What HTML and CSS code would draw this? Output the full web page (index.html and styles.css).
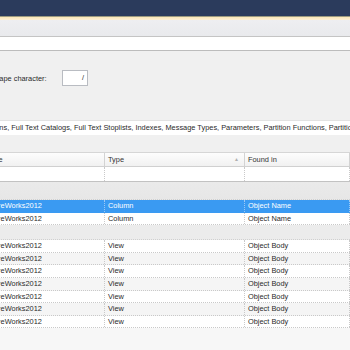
FILE: index.html
```html
<!DOCTYPE html>
<html lang="en">
<head>
    <meta charset="UTF-8">
    <title>SQL Search</title>
    <link rel="stylesheet" href="styles.css">
</head>
<body>

    <div class="app">
        <div class="titlebar"></div>
        <div class="accent"></div>
        <div class="toolbar"></div>
        <div class="searchbar"></div>

        <div class="options">
            <div class="escape-row">
                <span class="label">Escape character:</span>
                <span class="input">/</span>
            </div>
            <div class="types">Columns, Full Text Catalogs, Full Text Stoplists, Indexes, Message Types, Parameters, Partition Functions, Partition Schemes</div>
        </div>

        <div class="grid">
            <div class="grid-header">
                <div class="cell">Database</div>
                <div class="cell sorted">Type <span class="sort">&#9650;</span></div>
                <div class="cell">Found in</div>
            </div>
            <div class="row filter">
                <div class="cell"></div>
                <div class="cell"></div>
                <div class="cell"></div>
            </div>
            <div class="group first"></div>
            <div class="row selected">
                <div class="cell">AdventureWorks2012</div>
                <div class="cell">Column</div>
                <div class="cell">Object Name</div>
            </div>
            <div class="row">
                <div class="cell">AdventureWorks2012</div>
                <div class="cell">Column</div>
                <div class="cell">Object Name</div>
            </div>
            <div class="group"></div>
            <div class="row">
                <div class="cell">AdventureWorks2012</div>
                <div class="cell">View</div>
                <div class="cell">Object Body</div>
            </div>
            <div class="row alt">
                <div class="cell">AdventureWorks2012</div>
                <div class="cell">View</div>
                <div class="cell">Object Body</div>
            </div>
            <div class="row">
                <div class="cell">AdventureWorks2012</div>
                <div class="cell">View</div>
                <div class="cell">Object Body</div>
            </div>
            <div class="row alt">
                <div class="cell">AdventureWorks2012</div>
                <div class="cell">View</div>
                <div class="cell">Object Body</div>
            </div>
            <div class="row">
                <div class="cell">AdventureWorks2012</div>
                <div class="cell">View</div>
                <div class="cell">Object Body</div>
            </div>
            <div class="row alt">
                <div class="cell">AdventureWorks2012</div>
                <div class="cell">View</div>
                <div class="cell">Object Body</div>
            </div>
            <div class="row">
                <div class="cell">AdventureWorks2012</div>
                <div class="cell">View</div>
                <div class="cell">Object Body</div>
            </div>
        </div>
    </div>

</body>
</html>
```

FILE: styles.css
```css
body {
    margin: 0;
    font-family: 'Liberation Sans', Arial, sans-serif;
    font-size: 7.4px;
    color: #2a2a2a;
    background: #f4f4f4;
    overflow: hidden;
}

.app {
    width: 350px;
    height: 350px;
    overflow: hidden;
    background: #f4f4f4;
}

.titlebar {
    height: 16px;
    background: #2b3b5c;
}

.accent {
    height: 4px;
    border-top: 1px solid #9c9a80;
    box-sizing: border-box;
    background: linear-gradient(#fbe6b6, #fdf1d8);
}

.toolbar {
    height: 16px;
    background: linear-gradient(#eeeef1, #e9eaed);
    border-bottom: 1px solid #c4c4c4;
}

.searchbar {
    height: 13px;
    background: #fff;
    border-bottom: 1px solid #bcbcbc;
}

.options {
    height: 101px;
    background: #f0f0f0;
    display: flex;
    flex-direction: column;
}

.escape-row {
    display: flex;
    align-items: center;
    margin-left: -13px;
    margin-top: 19px;
}

.label {
    width: 75px;
}

.input {
    width: 26px;
    height: 16px;
    box-sizing: border-box;
    border: 1px solid #b9bcc2;
    background: #fff;
    text-align: right;
    padding-right: 3px;
    line-height: 14px;
}

.types {
    margin-top: 34px;
    height: 14px;
    line-height: 14px;
    background: #fff;
    border-top: 1px solid #e2e2e2;
    margin-left: -22px;
    white-space: nowrap;
}

.grid {
    margin-left: -32px;
    width: 382px;
    background: #f7f7f7;
    height: 198px;
}

.grid-header,
.row {
    display: grid;
    grid-template-columns: 137px 140px 1fr;
}

.grid-header {
    height: 15px;
    box-sizing: border-box;
    background: linear-gradient(#fdfdfd, #f1f1f1);
    border-top: 1px solid #d6d6d6;
    border-bottom: 1px solid #d0d0d0;
    color: #333;
}

.grid-header .cell {
    border-right: 1px solid #d3d3d3;
    line-height: 13px;
}

.cell {
    padding-left: 3px;
    white-space: nowrap;
    overflow: hidden;
}

.sorted {
    display: flex;
    justify-content: space-between;
    padding-right: 5px;
}

.sort {
    color: #b0b0b0;
    font-size: 5px;
}

.row {
    height: 12.6px;
    line-height: 12px;
    box-sizing: border-box;
    background: #fff;
    border-bottom: 1px dotted #c9c9c9;
}

.row .cell {
    border-right: 1px dotted #c9c9c9;
}

.row.alt {
    background: #f5f5f5;
}

.row.filter {
    height: 15px;
    border-bottom: 1px solid #c2c2c2;
}

.row.selected {
    background: #3a9af2;
    color: #fff;
    border-bottom-color: #3a9af2;
}

.row.selected .cell {
    border-right-color: #9cc9f5;
}

.group {
    height: 14px;
    background: #ececec;
    border-bottom: 1px dotted #d0d0d0;
}

.group.first {
    height: 17px;
    background: linear-gradient(#eaeaea, #e7e7e7);
}
```
